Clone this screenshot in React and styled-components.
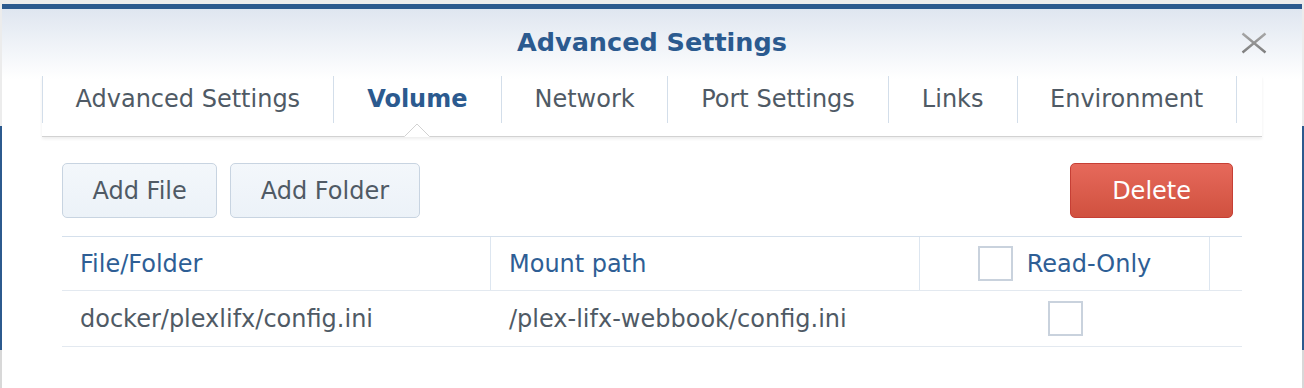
import React from "react";
import styled, { createGlobalStyle } from "styled-components";

const Global = createGlobalStyle`
  html, body { margin: 0; padding: 0; }
  body {
    font-family: "DejaVu Sans", Verdana, sans-serif;
    background: #f2f2f2;
  }
`;

const Page = styled.div`
  height: 388px;
  padding: 4px 2px 0;
  box-sizing: border-box;
  background: linear-gradient(
    to bottom,
    #ececec 0,
    #ececec 126px,
    #2c5a8e 126px,
    #2c5a8e 350px,
    #d8d8d8 350px
  );
  overflow: hidden;
`;

const Modal = styled.div`
  border-top: 5px solid #2c5a8e;
  background: linear-gradient(to bottom, #dfe6f0 0, #ffffff 70px);
  height: 379px;
`;

const Header = styled.div`
  display: grid;
  grid-template-columns: 1fr auto 1fr;
  align-items: center;
  height: 67px;
`;

const Title = styled.h1`
  grid-column: 2;
  margin: 0;
  font-size: 25.5px;
  font-weight: bold;
  color: #2b5a8f;
  line-height: 67px;
`;

const Close = styled.button`
  grid-column: 3;
  justify-self: end;
  margin-right: 35px;
  padding: 0;
  border: 0;
  background: none;
  width: 26px;
  height: 22px;
  display: flex;
  align-items: center;
  justify-content: center;
`;

const TabBar = styled.div`
  margin: 0 40px;
  display: flex;
  padding-bottom: 13px;
  border-bottom: 1px solid #d2d2d2;
  box-shadow: 0 2px 3px rgba(0, 0, 0, 0.07);
`;

const Tab = styled.div`
  position: relative;
  height: 47px;
  line-height: 47px;
  padding: 0 ${(p) => p.$pad || "33px"};
  border-left: 1px solid #d3deea;
  font-size: 24px;
  white-space: nowrap;
  color: ${(p) => (p.$active ? "#2b5a8f" : "#4f5a65")};
  font-weight: ${(p) => (p.$active ? "bold" : "normal")};
  &:last-child {
    border-right: 1px solid #d3deea;
  }
`;

const Notch = styled.svg`
  position: absolute;
  left: 50%;
  bottom: -14px;
  transform: translateX(-50%);
  display: block;
`;

const Content = styled.div`
  padding: 26px 60px 0;
`;

const Toolbar = styled.div`
  display: flex;
  align-items: center;
  gap: 13px;
  padding-right: 9px;
`;

const Spacer = styled.div`
  flex: 1;
`;

const Button = styled.button`
  height: 55px;
  box-sizing: border-box;
  padding: 0 ${(p) => (p.$danger ? "41px" : "29.5px")};
  border-radius: 5px;
  font-family: inherit;
  font-size: 24px;
  border: 1.5px solid ${(p) => (p.$danger ? "#c63f35" : "#c8d4e1")};
  background: ${(p) =>
    p.$danger
      ? "linear-gradient(to bottom, #e6695b, #d0513f)"
      : "linear-gradient(to bottom, #f3f7fb, #ecf2f8)"};
  color: ${(p) => (p.$danger ? "#ffffff" : "#4f5a65")};
`;

const Table = styled.div`
  margin-top: 18px;
  border-top: 1.5px solid #d5e0ec;
`;

const Row = styled.div`
  display: grid;
  grid-template-columns: 429px 429px 290px 1fr;
  height: ${(p) => (p.$head ? "53px" : "55px")};
  border-bottom: 1.5px solid #e3e9f0;
  box-sizing: content-box;
`;

const Cell = styled.div`
  display: flex;
  align-items: center;
  justify-content: ${(p) => (p.$center ? "center" : "flex-start")};
  gap: 14px;
  padding-left: ${(p) => (p.$center ? "0" : "18px")};
  font-size: 24px;
  white-space: nowrap;
  color: ${(p) => (p.$head ? "#2e5e95" : "#4f5a65")};
  border-right: ${(p) => (p.$sep ? "1.5px solid #dde6f0" : "none")};
`;

const Check = styled.span`
  display: inline-block;
  width: 35px;
  height: 35px;
  box-sizing: border-box;
  border: 2px solid #c9d2dd;
  background: #fff;
`;

function CloseIcon() {
  return (
    <svg width="26" height="22" viewBox="0 0 26 22">
      <defs>
        <linearGradient id="xg" x1="0" y1="0" x2="0" y2="1">
          <stop offset="0" stopColor="#a6a6a6" />
          <stop offset="1" stopColor="#7f7f7f" />
        </linearGradient>
      </defs>
      <path
        d="M1.5 1.5 L24.5 20.5 M24.5 1.5 L1.5 20.5"
        stroke="url(#xg)"
        strokeWidth="2.4"
        fill="none"
      />
    </svg>
  );
}

const tabs = [
  { label: "Advanced Settings", pad: "32.5px" },
  { label: "Volume", pad: "33.5px" },
  { label: "Network", pad: "32.5px" },
  { label: "Port Settings", pad: "33px" },
  { label: "Links", pad: "33px" },
  { label: "Environment", pad: "32.5px" },
];

export default function App() {
  return (
    <>
      <Global />
      <Page>
        <Modal>
          <Header>
            <Title>Advanced Settings</Title>
            <Close aria-label="Close">
              <CloseIcon />
            </Close>
          </Header>
          <TabBar>
            {tabs.map((t) => (
              <Tab key={t.label} $pad={t.pad} $active={t.label === "Volume"}>
                {t.label}
                {t.label === "Volume" && (
                  <Notch width="28" height="15" viewBox="0 0 28 15">
                    <path d="M0 14 L1 14 L14 1 L27 14 L28 14 L28 15 L0 15 Z" fill="#fff" />
                    <path d="M0 14.5 L1.5 14.5 L14 2 L26.5 14.5 L28 14.5" stroke="#d2d2d2" strokeWidth="1" fill="none" />
                  </Notch>
                )}
              </Tab>
            ))}
          </TabBar>
          <Content>
            <Toolbar>
              <Button>Add File</Button>
              <Button>Add Folder</Button>
              <Spacer />
              <Button $danger>Delete</Button>
            </Toolbar>
            <Table>
              <Row $head>
                <Cell $head $sep>File/Folder</Cell>
                <Cell $head $sep>Mount path</Cell>
                <Cell $head $sep $center>
                  <Check />
                  Read-Only
                </Cell>
                <Cell />
              </Row>
              <Row>
                <Cell>docker/plexlifx/config.ini</Cell>
                <Cell>/plex-lifx-webbook/config.ini</Cell>
                <Cell $center>
                  <Check />
                </Cell>
                <Cell />
              </Row>
            </Table>
          </Content>
        </Modal>
      </Page>
    </>
  );
}
